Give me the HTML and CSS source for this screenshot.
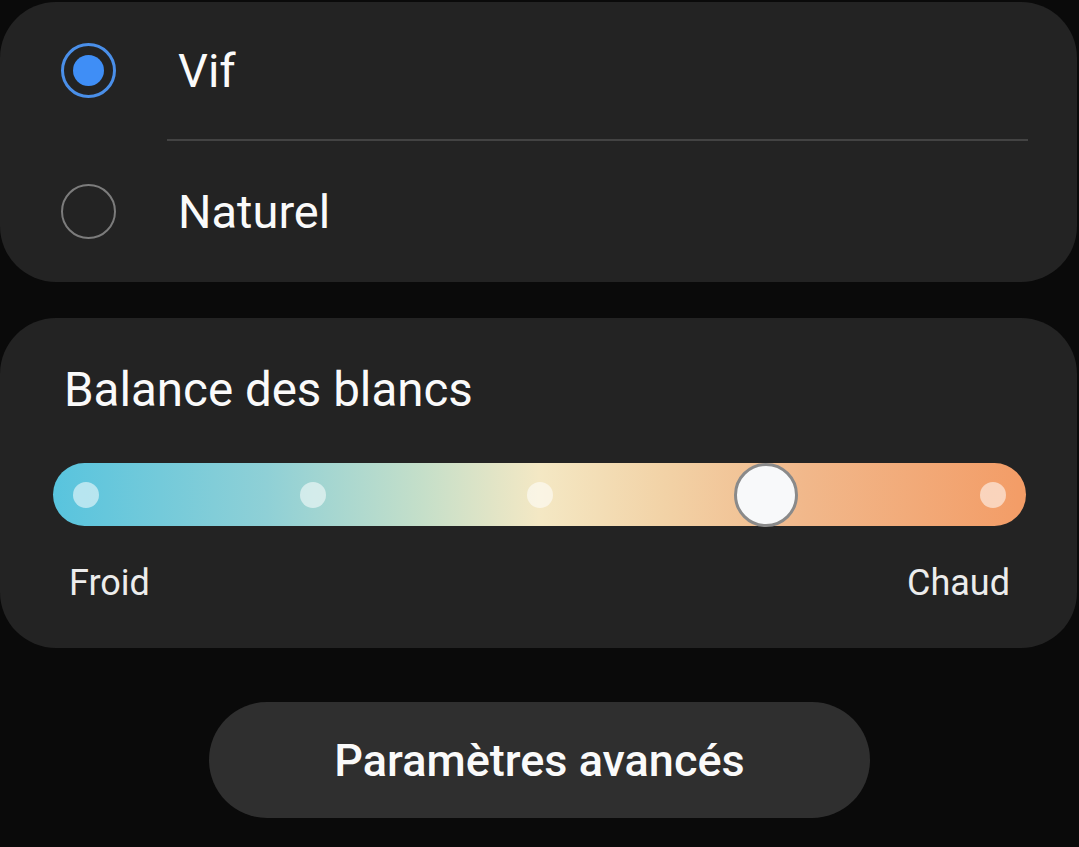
FILE: index.html
```html
<!DOCTYPE html>
<html lang="fr">
<head>
  <meta charset="UTF-8" />
  <meta name="viewport" content="width=device-width, initial-scale=1.0" />
  <title>Mode écran</title>
  <link rel="stylesheet" href="styles.css">
</head>
<body>
  <div class="card modes">
    <div class="mode-row">
      <span class="radio checked"></span>
      <span class="mode-label">Vif</span>
    </div>
    <div class="divider"></div>
    <div class="mode-row">
      <span class="radio"></span>
      <span class="mode-label">Naturel</span>
    </div>
  </div>

  <div class="card balance">
    <div class="balance-title">Balance des blancs</div>
    <div class="track">
      <span class="step"></span>
      <span class="step"></span>
      <span class="step"></span>
      <span class="thumb"></span>
      <span class="step"></span>
    </div>
    <div class="track-labels">
      <span>Froid</span>
      <span>Chaud</span>
    </div>
  </div>

  <div class="actions">
    <button class="advanced">Paramètres avancés</button>
  </div>
</body>
</html>
```

FILE: styles.css
```css
body {
  margin: 0;
  background: #0a0a0a;
  font-family: Roboto, "Noto Sans", sans-serif;
  color: #fafafa;
}
.card {
  background: #232323;
  border-radius: 56px;
  margin-right: 2px;
}
.modes {
  margin-top: 2px;
  height: 280px;
}
.mode-row {
  display: flex;
  align-items: center;
  height: 137px;
  padding-left: 61px;
}
.mode-row:last-child {
  height: 141px;
}
.radio {
  box-sizing: border-box;
  width: 55px;
  height: 55px;
  border-radius: 50%;
  border: 2px solid #7c7c7c;
  display: flex;
  align-items: center;
  justify-content: center;
}
.radio.checked {
  border: 3px solid #4a8fe9;
}
.radio.checked::after {
  content: "";
  width: 31px;
  height: 31px;
  border-radius: 50%;
  background: #3f8ef6;
}
.mode-label {
  margin-left: 62px;
  font-size: 47px;
  line-height: 55px;
}
.divider {
  height: 2px;
  background: #434343;
  margin: 0 49px 0 167px;
}
.balance {
  margin-top: 36px;
  height: 330px;
  box-sizing: border-box;
  padding-top: 45px;
}
.balance-title {
  font-size: 47.5px;
  line-height: 55px;
  padding-left: 64px;
}
.track {
  margin: 45px 51px 0 53px;
  height: 63px;
  border-radius: 32px;
  background: linear-gradient(90deg, #58c4de 0%, #8fd0d6 22%, #c5dfc9 38%, #f4e8c4 50%, #f2d2a6 63%, #f1b88b 77%, #f39c66 100%);
  display: flex;
  align-items: center;
  justify-content: space-between;
  padding: 0 20px;
}
.step {
  width: 26px;
  height: 26px;
  border-radius: 50%;
  background: rgba(255, 255, 255, 0.55);
}
.thumb {
  box-sizing: border-box;
  width: 64px;
  height: 64px;
  margin: 0 -19px;
  border-radius: 50%;
  background: #f8f9fa;
  border: 3px solid #8a8a8a;
}
.track-labels {
  display: flex;
  justify-content: space-between;
  margin-top: 36px;
  padding: 0 67px 0 69px;
  font-size: 36px;
  line-height: 42px;
  color: #ececec;
}
.actions {
  display: flex;
  justify-content: center;
  margin-top: 54px;
}
.advanced {
  width: 661px;
  height: 116px;
  border: none;
  border-radius: 58px;
  background: #2f2f2f;
  color: #fafafa;
  font-family: Roboto, "Noto Sans", sans-serif;
  font-size: 45px;
  font-weight: 500;
  padding: 0;
}
```
